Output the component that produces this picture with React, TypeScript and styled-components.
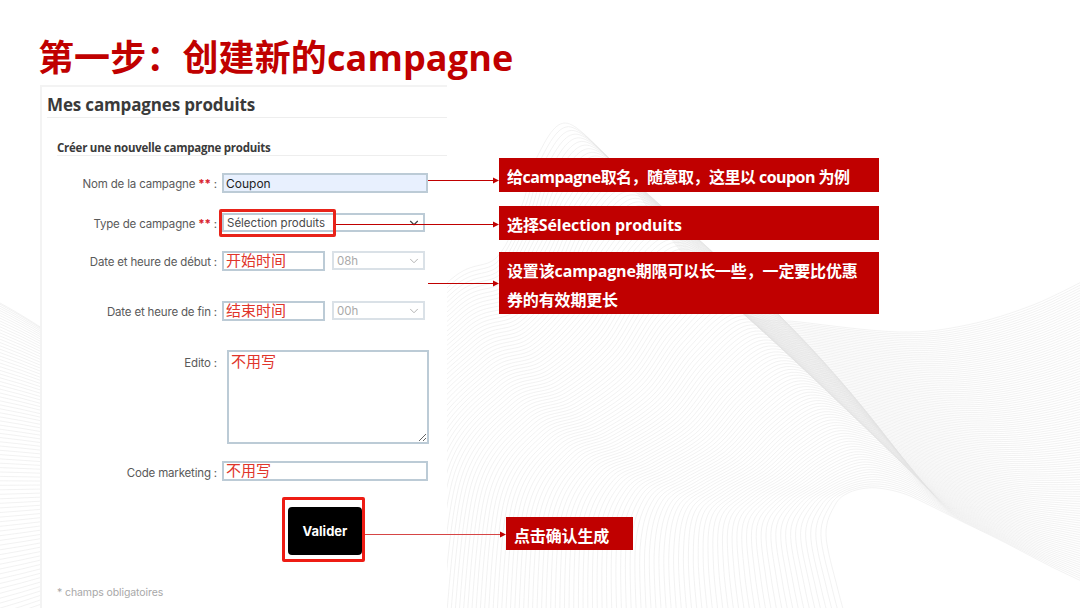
import React, { useMemo } from "react";
import styled, { createGlobalStyle } from "styled-components";
import { ChevronDown } from "lucide-react";

const Global = createGlobalStyle`
  html, body { margin: 0; padding: 0; background: #fff; }
  body { width: 1080px; height: 608px; overflow: hidden; }
`;

const cjk = `"Open Sans", "Noto Sans CJK SC", sans-serif`;
const ui = `Inter, "Noto Sans CJK SC", sans-serif`;

const Slide = styled.div`
  position: relative;
  width: 1080px;
  height: 608px;
  overflow: hidden;
  background: #fff;
`;
const WaveLayer = styled.svg`
  position: absolute;
  inset: 0;
`;
const ArrowLayer = styled.svg`
  position: absolute;
  inset: 0;
  pointer-events: none;
  z-index: 3;
`;
const Content = styled.div`
  position: relative;
  z-index: 1;
  display: flex;
  flex-direction: column;
  height: 100%;
`;
const Title = styled.h1`
  margin: 0;
  height: 85px;
  box-sizing: border-box;
  padding: 33px 0 0 38px;
  font: 700 36px/50px ${cjk};
  letter-spacing: 0.12px;
  color: #c00000;
  white-space: nowrap;
`;
const Body = styled.div`
  display: flex;
  flex: 1;
  padding-left: 40px;
  min-height: 0;
`;
const Panel = styled.section`
  width: 407px;
  box-sizing: border-box;
  background: #fff;
  border-left: 2px solid #f3f3f3;
  border-top: 2px solid #f3f3f3;
  font-family: ${ui};
`;
const PanelTitle = styled.h2`
  margin: 0 0 0 5px;
  height: 31px;
  box-sizing: border-box;
  padding-top: 7px;
  border-bottom: 1.5px solid #eeeeee;
  font: 700 17px/22px "Open Sans", sans-serif;
  letter-spacing: -0.15px;
  color: #3a3a3a;
`;
const SectionTitle = styled.h3`
  margin: 20px 0 0 15px;
  height: 18px;
  box-sizing: border-box;
  padding-top: 2px;
  border-bottom: 1.5px solid #eeeeee;
  font: 700 11.5px/16px "Open Sans", sans-serif;
  letter-spacing: -0.25px;
  color: #3a3a3a;
`;
const Row = styled.div<{ $top: number }>`
  display: flex;
  align-items: flex-start;
  gap: 4px;
  margin-top: ${(p) => p.$top}px;
`;
const Label = styled.label<{ $pad?: number }>`
  width: 175px;
  margin-right: 1px;
  flex: none;
  text-align: right;
  font-size: 11.5px;
  line-height: 16px;
  padding-top: ${(p) => p.$pad ?? 3}px;
  letter-spacing: -0.17px;
  color: #5a5a5a;
  white-space: nowrap;
`;
const Stars = styled.span`
  color: #d9232e;
  font-weight: 700;
`;
const TextField = styled.input<{ $w: number; $filled?: boolean; $note?: boolean }>`
  width: ${(p) => p.$w}px;
  height: 20px;
  box-sizing: border-box;
  padding: 0 2px ${(p) => (p.$note ? 4 : 0)}px;
  border: 2px solid #bccbd6;
  border-radius: 0;
  outline: none;
  background: ${(p) => (p.$filled ? "#e8f0fe" : "#fff")};
  color: ${(p) => (p.$note ? "#e0352b" : "#222")};
  font-family: ${ui};
  font-size: ${(p) => (p.$note ? 15 : 12)}px;
`;
const NoteArea = styled.textarea`
  width: 202px;
  height: 94px;
  margin: 0 0 0 5px;
  box-sizing: border-box;
  padding: 1px 2px;
  border: 2px solid #bccbd6;
  border-radius: 0;
  outline: none;
  background: #fff;
  color: #e0352b;
  font-family: ${ui};
  font-size: 15px;
  line-height: 18px;
  display: block;
`;
const SelectBox = styled.div<{ $w: number; $muted?: boolean; $shift?: number }>`
  width: ${(p) => p.$w}px;
  height: 19px;
  margin-left: ${(p) => p.$shift ?? 0}px;
  box-sizing: border-box;
  display: flex;
  align-items: center;
  justify-content: space-between;
  padding: 0 2px 0 3px;
  border: 2px solid ${(p) => (p.$muted ? "#dae1e7" : "#bccbd6")};
  color: ${(p) => (p.$muted ? "#a9a9a9" : "#4a4a4a")};
  font-size: 11.5px;
  background: #fff;
`;
const SelectSpot = styled.div`
  position: relative;
`;
const Highlight = styled.div`
  position: absolute;
  left: -3px;
  top: -4px;
  width: 117px;
  height: 28px;
  box-sizing: border-box;
  border: 3px solid #e8231a;
  border-radius: 2px;
`;
const ButtonFrame = styled.div`
  width: 83px;
  height: 65px;
  box-sizing: border-box;
  margin: 16px 0 0 240px;
  padding: 7px 0 0 3px;
  border: 3px solid #ee1c14;
  border-radius: 2px;
`;
const SubmitButton = styled.button`
  display: block;
  width: 74px;
  height: 48px;
  border: none;
  border-radius: 4px;
  padding: 0;
  background: #000;
  color: #fff;
  font: 700 13px ${ui};
`;
const Footnote = styled.p`
  margin: 24px 0 0 15px;
  font-size: 10.5px;
  line-height: 14px;
  letter-spacing: -0.1px;
  color: #a8a8a8;
`;
const Callouts = styled.div`
  display: flex;
  flex-direction: column;
  align-items: flex-start;
  padding: 73px 0 0 52px;
`;
const Callout = styled.div<{ $top?: number; $indent?: number; $w?: number; $h: number; $track: number }>`
  width: ${(p) => p.$w ?? 380}px;
  height: ${(p) => p.$h}px;
  box-sizing: border-box;
  margin: ${(p) => p.$top ?? 0}px 0 0 ${(p) => p.$indent ?? 0}px;
  padding: 5px 8px 0;
  background: #c00000;
  color: #fff;
  font: 700 16px/29px ${cjk};
  letter-spacing: ${(p) => p.$track}px;
`;

const key = {
  outer: [[300,640],[350,400],[447,283],[497,257],[522,205],[537,157],[565,123],[607,157],[637,193],[690,262],[747,314],[800,322],[900,332],[967,325],[1033,305],[1095,275]],
  inner: [[852,640],[838,590],[826,535],[835,505],[848,493],[867,488],[885,489],[905,494],[925,503],[945,513],[965,523],[1000,540],[1025,553],[1050,566],[1075,578],[1105,592]],
  bend: [[-40,0],[-50,20],[-60,50],[-50,60],[-20,60],[0,40],[20,20],[30,10],[30,0],[20,0],[0,0],[0,0],[0,0],[0,0],[0,0],[0,0]],
};

function smooth(pts: number[][]) {
  let d = `M${pts[0][0].toFixed(1)} ${pts[0][1].toFixed(1)}`;
  for (let i = 0; i < pts.length - 1; i++) {
    const a = pts[Math.max(i - 1, 0)];
    const b = pts[i];
    const c = pts[i + 1];
    const e = pts[Math.min(i + 2, pts.length - 1)];
    d += `C${(b[0] + (c[0] - a[0]) / 6).toFixed(1)} ${(b[1] + (c[1] - a[1]) / 6).toFixed(1)} ${(c[0] - (e[0] - b[0]) / 6).toFixed(1)} ${(c[1] - (e[1] - b[1]) / 6).toFixed(1)} ${c[0].toFixed(1)} ${c[1].toFixed(1)}`;
  }
  return d;
}

function Waves() {
  const paths = useMemo(() => {
    const out: string[] = [];
    const n = 120;
    for (let i = 0; i <= n; i++) {
      const t = i / n;
      const k = 4 * t * (1 - t);
      out.push(
        smooth(
          key.outer.map((o, j) => [
            o[0] + (key.inner[j][0] - o[0]) * t + key.bend[j][0] * k,
            o[1] + (key.inner[j][1] - o[1]) * t + key.bend[j][1] * k,
          ])
        )
      );
    }
    const m = 80;
    for (let i = 0; i <= m; i++) {
      const s = i / m;
      const y0 = 303 + 320 * Math.pow(s, 1.25);
      const slope = 0.6 - 0.95 * s;
      out.push(`M0 ${y0.toFixed(1)}Q20 ${(y0 + slope * 18).toFixed(1)} 44 ${(y0 + slope * 44).toFixed(1)}`);
    }
    return out;
  }, []);
  return (
    <WaveLayer width="1080" height="608" viewBox="0 0 1080 608" aria-hidden="true">
      {paths.map((d, i) => (
        <path key={i} d={d} fill="none" stroke="#e2e2e2" strokeWidth="0.45" />
      ))}
    </WaveLayer>
  );
}

const arrows = [
  { x1: 428, x2: 499, y: 180, color: "#c00000" },
  { x1: 336, x2: 499, y: 224, color: "#c00000" },
  { x1: 428, x2: 499, y: 283, color: "#c00000" },
  { x1: 365, x2: 506, y: 534, color: "#d64545" },
];

export default function App() {
  return (
    <Slide>
      <Global />
      <Waves />
      <Content>
        <Title>第一步：创建新的campagne</Title>
        <Body>
          <Panel>
            <PanelTitle>Mes campagnes produits</PanelTitle>
            <SectionTitle>Créer une nouvelle campagne produits</SectionTitle>
            <Row $top={17}>
              <Label>Nom de la campagne <Stars>**</Stars> :</Label>
              <TextField $w={206} $filled readOnly value="Coupon" />
            </Row>
            <Row $top={20}>
              <Label>Type de campagne <Stars>**</Stars> :</Label>
              <SelectSpot>
                <SelectBox $w={203}>
                  Sélection produits
                  <ChevronDown size={14} strokeWidth={2} color="#444" />
                </SelectBox>
                <Highlight />
              </SelectSpot>
            </Row>
            <Row $top={19}>
              <Label>Date et heure de début :</Label>
              <TextField $w={103} $note readOnly value="开始时间" />
              <SelectBox $w={93} $muted $shift={3}>
                08h
                <ChevronDown size={14} strokeWidth={1.5} color="#a9a9a9" />
              </SelectBox>
            </Row>
            <Row $top={30}>
              <Label>Date et heure de fin :</Label>
              <TextField $w={103} $note readOnly value="结束时间" />
              <SelectBox $w={93} $muted $shift={3}>
                00h
                <ChevronDown size={14} strokeWidth={1.5} color="#a9a9a9" />
              </SelectBox>
            </Row>
            <Row $top={29}>
              <Label $pad={5}>Edito :</Label>
              <NoteArea readOnly value="不用写" />
            </Row>
            <Row $top={17}>
              <Label $pad={4}>Code marketing :</Label>
              <TextField $w={206} $note readOnly value="不用写" />
            </Row>
            <ButtonFrame>
              <SubmitButton>Valider</SubmitButton>
            </ButtonFrame>
            <Footnote>* champs obligatoires</Footnote>
          </Panel>
          <Callouts>
            <Callout $h={34} $track={-0.53}>给campagne取名，随意取，这里以 coupon 为例</Callout>
            <Callout $h={34} $top={14} $track={-0.1}>选择Sélection produits</Callout>
            <Callout $h={62} $top={12} $track={-0.15}>设置该campagne期限可以长一些，一定要比优惠券的有效期更长</Callout>
            <Callout $h={33} $top={203} $indent={7} $w={127} $track={-0.15}>点击确认生成</Callout>
          </Callouts>
        </Body>
      </Content>
      <ArrowLayer width="1080" height="608" viewBox="0 0 1080 608" aria-hidden="true">
        {arrows.map((a) => (
          <g key={a.y}>
            <line x1={a.x1} y1={a.y + 0.5} x2={a.x2 - 4} y2={a.y + 0.5} stroke={a.color} strokeWidth="1" />
            <polygon points={`${a.x2 - 6},${a.y - 2.5} ${a.x2},${a.y + 0.5} ${a.x2 - 6},${a.y + 3.5}`} fill="#c00000" />
          </g>
        ))}
      </ArrowLayer>
    </Slide>
  );
}
